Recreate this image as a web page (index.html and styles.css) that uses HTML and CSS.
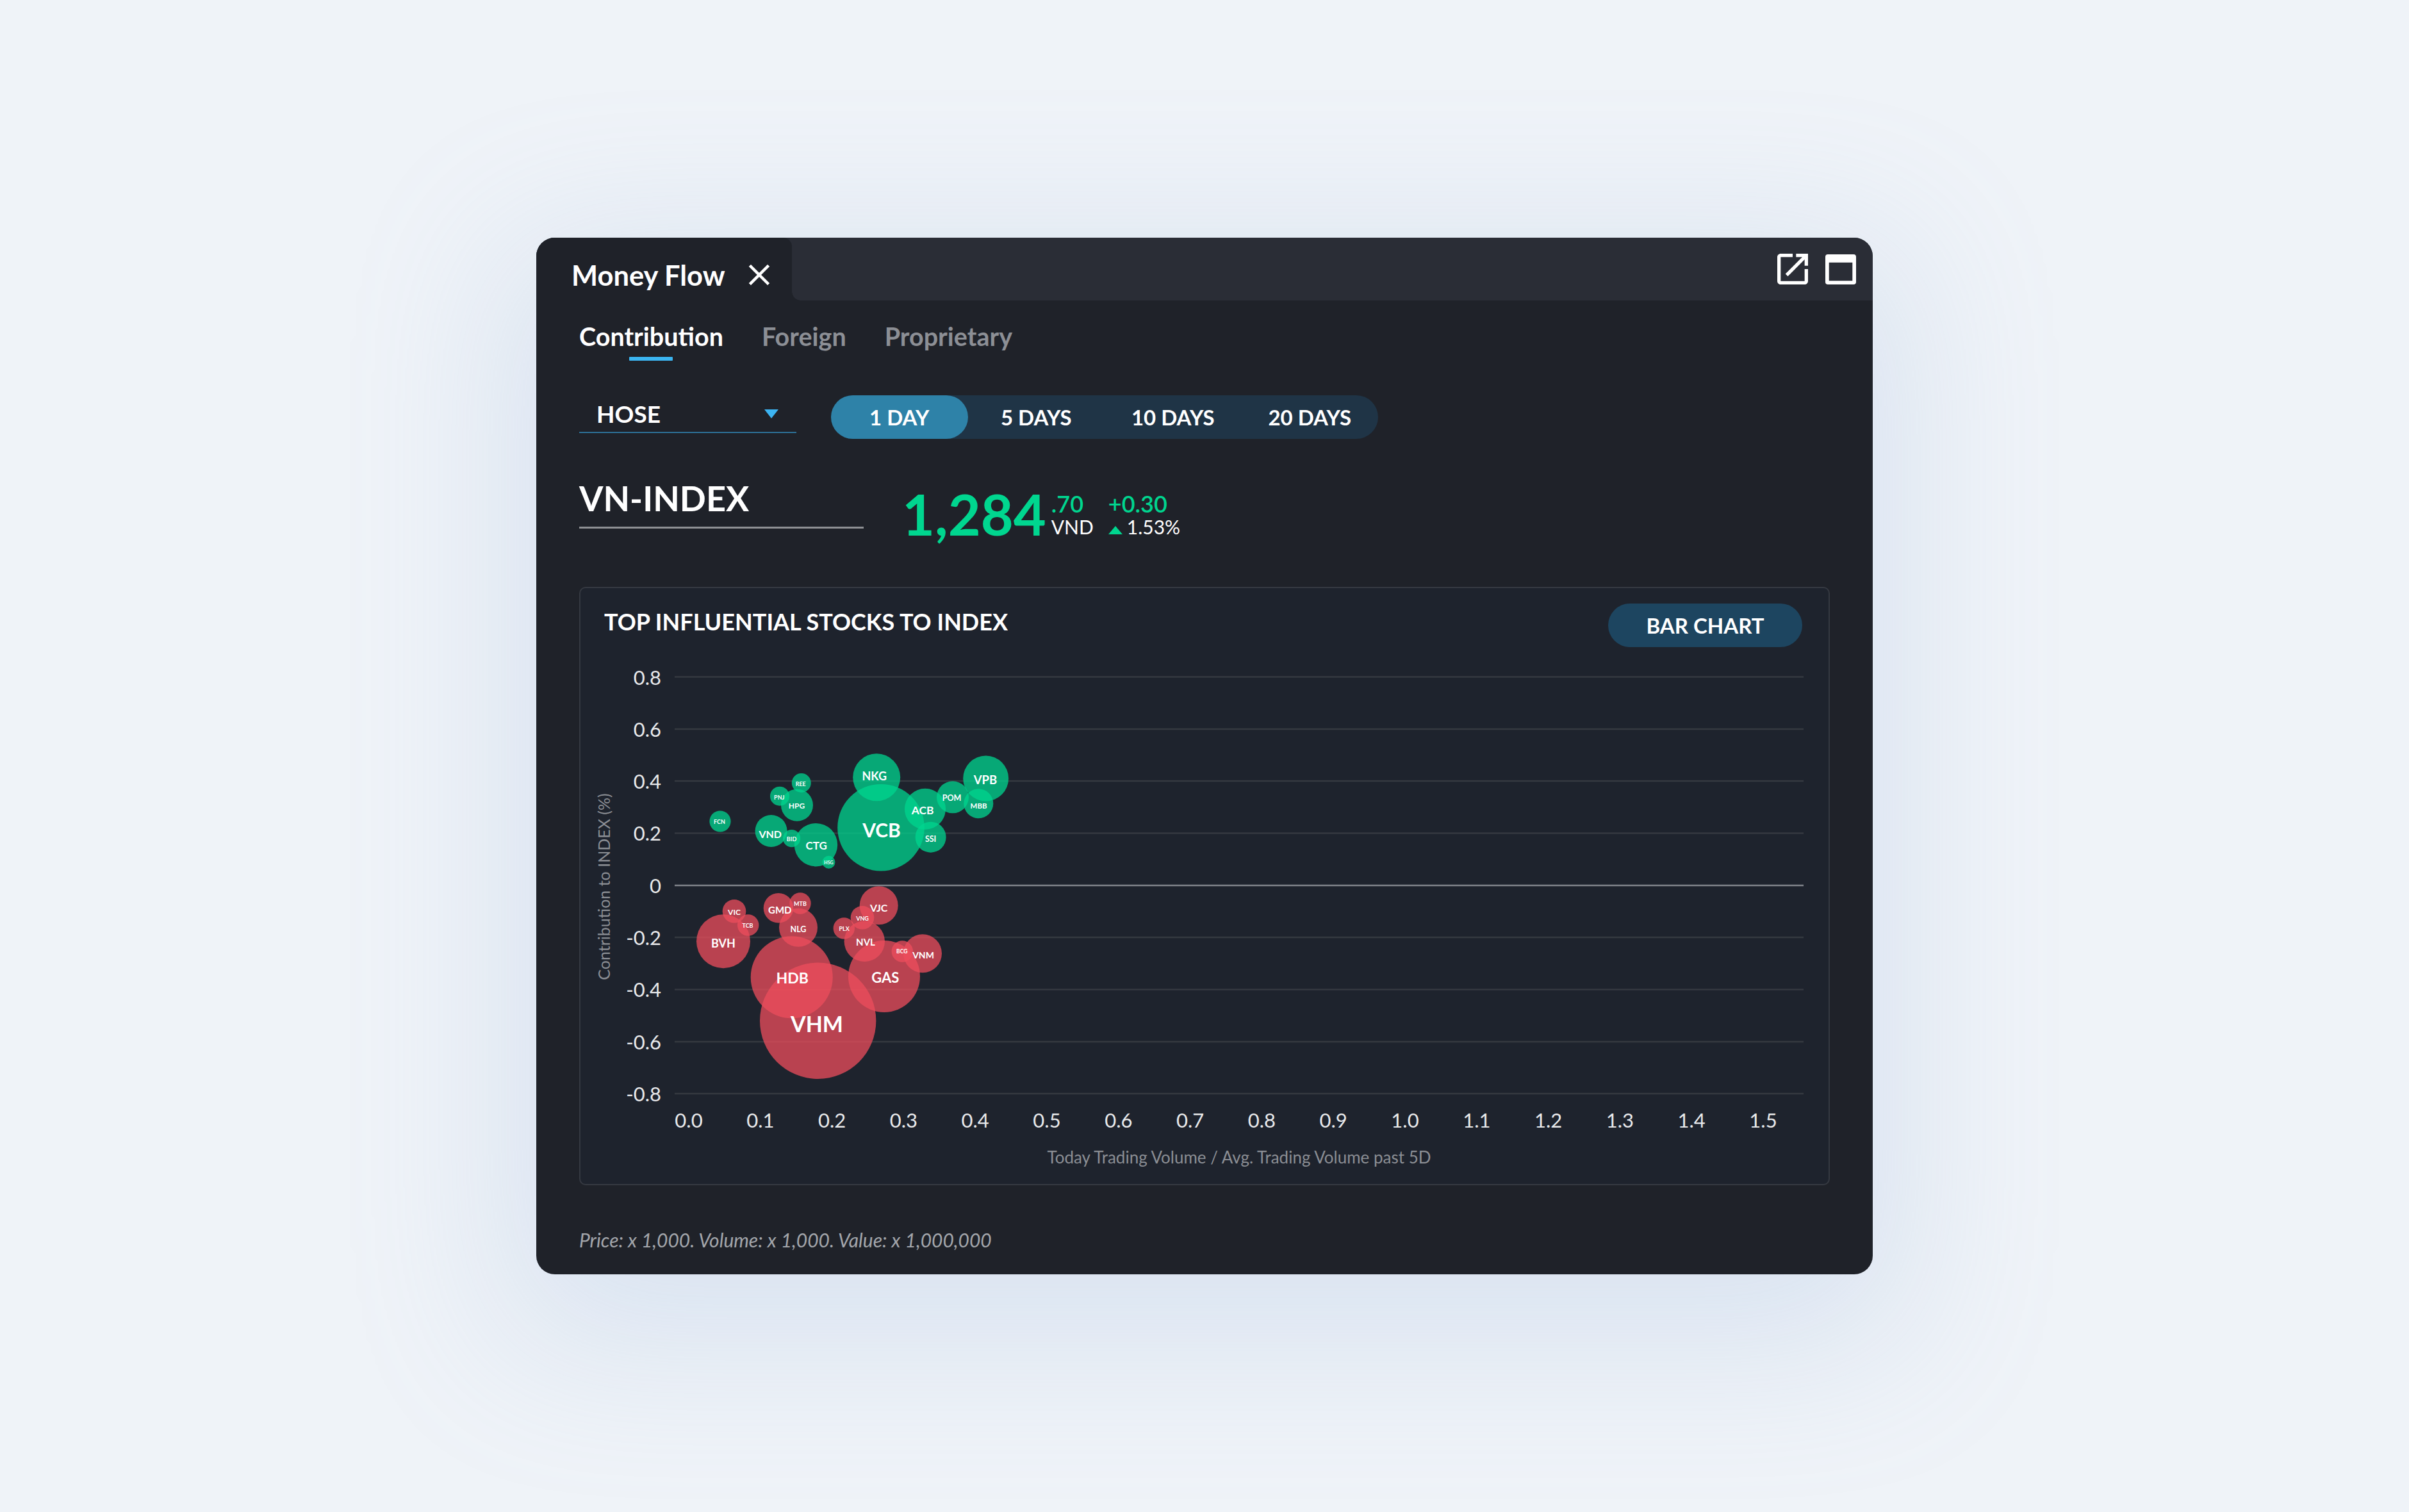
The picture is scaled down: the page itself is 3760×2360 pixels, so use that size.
FILE: index.html
```html
<!DOCTYPE html>
<html lang="en">
<head>
<meta charset="utf-8">
<title>Money Flow</title>
<link rel="stylesheet" href="styles.css">
</head>
<body>
<div class="stage">
  <div class="card">
    <header class="head">
      <div class="tab">
        <span class="tab-title">Money Flow</span>
        <svg class="close" width="32" height="32" viewBox="0 0 32 32"><path d="M3 3L29 29M29 3L3 29" stroke="#fff" stroke-width="4.5" stroke-linecap="square" fill="none"/></svg>
      </div>
      <div class="head-rest">
        <svg class="icon" width="64" height="64" viewBox="0 0 24 24"><path fill="#fff" d="M19 19H5V5h7V3H5c-1.11 0-2 .9-2 2v14c0 1.1.89 2 2 2h14c1.1 0 2-.9 2-2v-7h-2v7zM14 3v2h3.59l-9.83 9.83 1.41 1.41L19 6.41V10h2V3h-7z"/></svg>
        <svg class="icon win" width="48" height="47" viewBox="0 0 48 47"><path fill="#fff" fill-rule="evenodd" d="M4 0h40a4 4 0 0 1 4 4v39a4 4 0 0 1-4 4H4a4 4 0 0 1-4-4V4a4 4 0 0 1 4-4zM5.7 12.7v28.6h36.6V12.7z"/></svg>
      </div>
    </header>

    <main class="body">
      <nav class="subtabs">
        <div class="subtab active">Contribution</div>
        <div class="subtab">Foreign</div>
        <div class="subtab">Proprietary</div>
      </nav>

      <div class="controls">
        <div class="select"><span>HOSE</span><span class="caret"></span></div>
        <div class="seg">
          <button class="on">1 DAY</button>
          <button>5 DAYS</button>
          <button>10 DAYS</button>
          <button>20 DAYS</button>
        </div>
      </div>

      <div class="index-row">
        <div class="index-name">VN-INDEX</div>
        <div class="price">
          <span class="big">1,284</span>
          <div class="col first"><span class="dec">.70</span><span class="unit">VND</span></div>
          <div class="col second"><span class="dec">+0.30</span><span class="unit"><i class="tri"></i>1.53%</span></div>
        </div>
      </div>

      <section class="panel">
        <div class="panel-head">
          <h2>TOP INFLUENTIAL STOCKS TO INDEX</h2>
          <button class="bar">BAR CHART</button>
        </div>
        <svg class="plot" width="1948" height="838" viewBox="906 1010 1948 838">
          <g class="grid">
            <line x1="1053" x2="2815" y1="1056.5" y2="1056.5"/>
            <line x1="1053" x2="2815" y1="1138" y2="1138"/>
            <line x1="1053" x2="2815" y1="1219" y2="1219"/>
            <line x1="1053" x2="2815" y1="1300.5" y2="1300.5"/>
            <line x1="1053" x2="2815" y1="1463" y2="1463"/>
            <line x1="1053" x2="2815" y1="1544.5" y2="1544.5"/>
            <line x1="1053" x2="2815" y1="1626" y2="1626"/>
            <line x1="1053" x2="2815" y1="1707" y2="1707"/>
          </g>
          <line class="zero" x1="1053" x2="2815" y1="1382" y2="1382"/>
          <g class="ylab">
            <text x="1032" y="1057">0.8</text>
            <text x="1032" y="1138">0.6</text>
            <text x="1032" y="1219">0.4</text>
            <text x="1032" y="1300">0.2</text>
            <text x="1032" y="1382">0</text>
            <text x="1032" y="1463">-0.2</text>
            <text x="1032" y="1544">-0.4</text>
            <text x="1032" y="1626">-0.6</text>
            <text x="1032" y="1707">-0.8</text>
          </g>
          <text class="ytitle" transform="translate(942 1384) rotate(-90)">Contribution to INDEX (%)</text>
          <g class="xlab">
            <text x="1075" y="1760">0.0</text>
            <text x="1186.8" y="1760">0.1</text>
            <text x="1298.6" y="1760">0.2</text>
            <text x="1410.4" y="1760">0.3</text>
            <text x="1522.2" y="1760">0.4</text>
            <text x="1634" y="1760">0.5</text>
            <text x="1745.8" y="1760">0.6</text>
            <text x="1857.6" y="1760">0.7</text>
            <text x="1969.4" y="1760">0.8</text>
            <text x="2081.2" y="1760">0.9</text>
            <text x="2193" y="1760">1.0</text>
            <text x="2304.8" y="1760">1.1</text>
            <text x="2416.6" y="1760">1.2</text>
            <text x="2528.4" y="1760">1.3</text>
            <text x="2640.2" y="1760">1.4</text>
            <text x="2752" y="1760">1.5</text>
          </g>
          <text class="xtitle" x="1934" y="1816">Today Trading Volume / Avg. Trading Volume past 5D</text>

          <g class="up">
            <circle cx="1124" cy="1282" r="16.6"/>
            <circle cx="1203.6" cy="1297" r="25"/>
            <circle cx="1235.6" cy="1308.7" r="13.6"/>
            <circle cx="1273.5" cy="1318.7" r="33.7"/>
            <circle cx="1293.5" cy="1345.7" r="10"/>
            <circle cx="1217" cy="1242.7" r="15"/>
            <circle cx="1244" cy="1256.7" r="25"/>
            <circle cx="1250.8" cy="1222" r="15"/>
            <circle cx="1368.2" cy="1213.3" r="37"/>
            <circle cx="1375" cy="1291.7" r="67.8"/>
            <circle cx="1444" cy="1262.7" r="32"/>
            <circle cx="1452.6" cy="1306.7" r="24"/>
            <circle cx="1487" cy="1244.3" r="25"/>
            <circle cx="1538.7" cy="1215" r="35.5"/>
            <circle cx="1527.3" cy="1254.3" r="23"/>
          </g>
          <g class="down">
            <circle cx="1129" cy="1469.3" r="42"/>
            <circle cx="1146" cy="1422.3" r="18.3"/>
            <circle cx="1167.7" cy="1444" r="16.7"/>
            <circle cx="1215" cy="1417.3" r="23.3"/>
            <circle cx="1249" cy="1410" r="16.7"/>
            <circle cx="1246" cy="1447.7" r="30"/>
            <circle cx="1235.7" cy="1525.3" r="64"/>
            <circle cx="1276.7" cy="1593.3" r="90.7"/>
            <circle cx="1317.3" cy="1449" r="16.7"/>
            <circle cx="1346" cy="1432.3" r="18.3"/>
            <circle cx="1371.7" cy="1413.3" r="30"/>
            <circle cx="1349.3" cy="1469.3" r="31.7"/>
            <circle cx="1380" cy="1524" r="56"/>
            <circle cx="1408.3" cy="1485" r="16.7"/>
            <circle cx="1440" cy="1488.3" r="30"/>
          </g>
          <g class="blab">
            <text x="1123" y="1282" font-size="9">FCN</text>
            <text x="1202.2" y="1301" font-size="16">VND</text>
            <text x="1235.6" y="1309" font-size="9">BID</text>
            <text x="1274.2" y="1319" font-size="17">CTG</text>
            <text x="1293.5" y="1346" font-size="7">HSG</text>
            <text x="1216.3" y="1244.3" font-size="9">PNJ</text>
            <text x="1243.5" y="1257.7" font-size="12">HPG</text>
            <text x="1249.7" y="1223.3" font-size="9">REE</text>
            <text x="1364.8" y="1210.7" font-size="18">NKG</text>
            <text x="1376" y="1294.7" font-size="30">VCB</text>
            <text x="1440.2" y="1264.7" font-size="17.5">ACB</text>
            <text x="1452.6" y="1309.7" font-size="12.5">SSI</text>
            <text x="1485.6" y="1245.7" font-size="12.5">POM</text>
            <text x="1538" y="1217.3" font-size="18.5">VPB</text>
            <text x="1527.6" y="1257.3" font-size="11.5">MBB</text>

            <text x="1129" y="1471.7" font-size="18">BVH</text>
            <text x="1146" y="1423.3" font-size="12">VIC</text>
            <text x="1167" y="1444.3" font-size="9">TCB</text>
            <text x="1217.3" y="1420" font-size="15">GMD</text>
            <text x="1249" y="1410.7" font-size="9">MTB</text>
            <text x="1246" y="1450.7" font-size="12.5">NLG</text>
            <text x="1236.7" y="1525.7" font-size="23">HDB</text>
            <text x="1275" y="1597.3" font-size="34">VHM</text>
            <text x="1317.7" y="1449.7" font-size="9">PLX</text>
            <text x="1346" y="1433.7" font-size="9">VNG</text>
            <text x="1371.7" y="1416" font-size="16">VJC</text>
            <text x="1351" y="1470.3" font-size="15">NVL</text>
            <text x="1381.7" y="1525.7" font-size="22">GAS</text>
            <text x="1407.7" y="1485.3" font-size="8.5">BCG</text>
            <text x="1441" y="1490.7" font-size="14">VNM</text>
          </g>
        </svg>
      </section>

      <p class="note">Price: x 1,000. Volume: x 1,000. Value: x 1,000,000</p>
    </main>
  </div>
</div>
</body>
</html>
```

FILE: styles.css
```css
* { box-sizing: border-box; margin: 0; padding: 0; }
html, body { height: 100%; }
body {
  background: #eff3f8;
  font-family: Lato, "Noto Sans", sans-serif;
  color: #fff;
}
.stage {
  min-height: 100vh;
  display: flex;
  align-items: center;
  justify-content: center;
}
.card {
  width: 2086px;
  height: 1618px;
  background: #1f2229;
  border-radius: 29px;
  overflow: hidden;
  box-shadow: 0 60px 240px 40px rgba(150, 180, 220, 0.25);
}

/* header */
.head {
  display: flex;
  height: 98px;
  background: #2a2d36;
}
.tab {
  position: relative;
  width: 399px;
  display: flex;
  align-items: center;
  gap: 37px;
  padding: 18px 0 0 55px;
  background: #1f2229;
  border-top-right-radius: 14px;
}
.tab::after {
  content: "";
  position: absolute;
  right: -14px;
  bottom: 0;
  width: 14px;
  height: 14px;
  background: radial-gradient(circle at 100% 0, transparent 13.5px, #1f2229 14px);
}
.tab-title {
  font-size: 43.5px;
  font-weight: 700;
  white-space: nowrap;
}
.close { display: block; }
.head-rest {
  flex: 1;
  display: flex;
  justify-content: flex-end;
  align-items: center;
  gap: 19px;
  padding-right: 26px;
}
.icon { display: block; }

/* body */
.body { padding: 0 67px; }
.subtabs {
  display: flex;
  gap: 60px;
  margin-top: 33px;
}
.subtab {
  display: flex;
  flex-direction: column;
  align-items: center;
  font-size: 39.5px;
  line-height: 46px;
  font-weight: 700;
  color: #8c8f95;
}
.subtab::after {
  content: "";
  width: 68px;
  height: 6px;
  margin-top: 9px;
  border-radius: 1px;
}
.subtab.active { color: #fff; }
.subtab.active::after { background: #3bb5f0; }

.controls {
  display: flex;
  align-items: flex-start;
  gap: 54px;
  margin-top: 54px;
}
.select {
  width: 339px;
  height: 59px;
  border-bottom: 2px solid #2d6f95;
  display: flex;
  align-items: center;
  justify-content: space-between;
  padding: 0 28px 0 27px;
  font-size: 37px;
  font-weight: 700;
}
.caret {
  width: 0;
  height: 0;
  border-left: 11.5px solid transparent;
  border-right: 11.5px solid transparent;
  border-top: 14px solid #3cb4f2;
}
.seg {
  width: 854px;
  height: 68px;
  border-radius: 34px;
  background: #1f3446;
  display: grid;
  grid-template-columns: repeat(4, 1fr);
}
.seg button {
  border: 0;
  background: none;
  color: #fff;
  font-family: Lato, "Noto Sans", sans-serif;
  font-size: 33px;
  font-weight: 700;
  border-radius: 34px;
}
.seg button.on { background: #2e82a8; }

.index-row {
  display: flex;
  align-items: flex-start;
  gap: 60px;
  height: 79px;
  margin-top: 61px;
}
.index-name {
  width: 444px;
  font-size: 54px;
  font-weight: 700;
  line-height: 64px;
  padding-bottom: 12px;
  border-bottom: 3px solid #8e9094;
}
.price {
  display: flex;
  align-items: flex-start;
  margin-top: 12px;
}
.big {
  font-size: 88px;
  line-height: 88px;
  font-weight: 700;
  color: #00d68f;
}
.col {
  display: flex;
  flex-direction: column;
  margin-top: 10px;
}
.col.first { margin-left: 8px; }
.col.second { margin-left: 23px; }
.dec {
  font-size: 36px;
  line-height: 37px;
  font-weight: 600;
  color: #00d68f;
}
.unit {
  font-size: 30px;
  line-height: 34px;
  font-weight: 400;
}
.tri {
  display: inline-block;
  width: 0;
  height: 0;
  border-left: 11px solid transparent;
  border-right: 11px solid transparent;
  border-bottom: 13px solid #00d68f;
  margin-right: 7px;
}

/* chart panel */
.panel {
  margin-top: 91px;
  width: 1952px;
  border: 2px solid #353941;
  border-radius: 10px;
  background: #1e232d;
}
.panel-head {
  display: flex;
  justify-content: space-between;
  align-items: center;
  padding: 24px 41px 0 37px;
}
.panel-head h2 {
  font-size: 36px;
  font-weight: 700;
  padding-bottom: 12px;
}
.bar {
  width: 303px;
  height: 68px;
  border: 0;
  border-radius: 34px;
  background: #1d4560;
  color: #fff;
  font-family: Lato, "Noto Sans", sans-serif;
  font-size: 33px;
  font-weight: 700;
}
.plot { display: block; }
.plot text { font-family: Lato, "Noto Sans", sans-serif; }
.grid line { stroke: #353940; stroke-width: 2.5; }
.zero { stroke: #80838a; stroke-width: 2.5; }
.ylab text {
  font-size: 31px;
  fill: #e8e9eb;
  text-anchor: end;
  dominant-baseline: central;
}
.xlab text {
  font-size: 31px;
  fill: #e8e9eb;
  text-anchor: middle;
}
.ytitle, .xtitle {
  font-size: 26px;
  fill: #8b8e94;
  text-anchor: middle;
}
.ytitle { font-size: 25px; dominant-baseline: central; }
.up circle { fill: rgba(0, 214, 143, 0.75); }
.down circle { fill: rgba(238, 78, 92, 0.75); }
.blab text {
  fill: #fff;
  font-weight: 700;
  text-anchor: middle;
  dominant-baseline: central;
}

.note {
  margin-top: 65px;
  font-size: 30px;
  line-height: 40px;
  font-style: italic;
  color: #a3a6ab;
}
```
